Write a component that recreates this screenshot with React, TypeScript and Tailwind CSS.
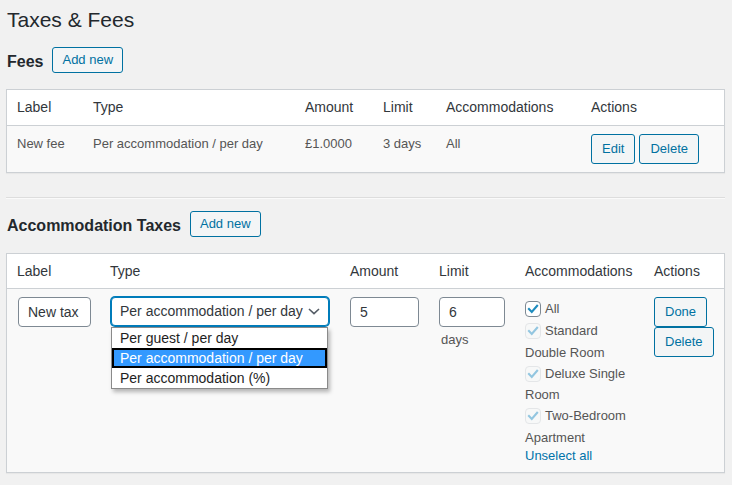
import React from "react";

function Btn({ children, className = "" }: { children: React.ReactNode; className?: string }) {
  return (
    <span
      className={
        "inline-flex shrink-0 items-center justify-center whitespace-nowrap rounded-[3px] border border-[#0071a1] bg-[#f3f5f6] text-[13px] text-[#0071a1] " +
        className
      }
    >
      {children}
    </span>
  );
}

function Check({ faint }: { faint?: boolean }) {
  return (
    <span
      className={
        faint
          ? "mr-[4px] inline-flex h-[16px] w-[16px] shrink-0 items-center justify-center rounded-[4px] border border-[#e4e6e8] bg-[#f7f8f8]"
          : "mr-[4px] inline-flex h-[16px] w-[16px] shrink-0 items-center justify-center rounded-[4px] border border-[#7e8993] bg-white"
      }
    >
      <svg viewBox="0 0 16 16" className="h-[16px] w-[16px]">
        <path
          d="M3.4 8.1 L6.6 11.4 L12.7 4.3"
          fill="none"
          stroke={faint ? "#93c6e0" : "#1e8cbe"}
          strokeWidth={2.4}
          strokeLinecap="square"
          strokeLinejoin="miter"
        />
      </svg>
    </span>
  );
}

export default function App() {
  return (
    <div className="min-h-[485px] bg-[#f1f1f1] pl-[6px] pr-[7px] pt-[5px] font-['Liberation_Sans',Arial,sans-serif] text-[13px] text-[#444]">
      <h1 className="pl-[1px] text-[21px] font-normal leading-[30px] text-[#23282d]">Taxes &amp; Fees</h1>

      <div className="mt-[12px] flex items-start gap-[9px] pl-[1px]">
        <h2 className="pt-[2px] text-[16px] font-bold leading-[26px] text-[#23282d]">Fees</h2>
        <Btn className="h-[26px] px-[9px]">Add new</Btn>
      </div>

      <div className="mt-[14px] border border-[#ccd0d4] bg-white shadow-[0_1px_1px_rgba(0,0,0,0.04)]">
        <div className="grid grid-cols-[76px_212px_78px_63px_145px_1fr] border-b border-[#ccd0d4] bg-white text-[14px] leading-[19px] text-[#32373c]">
          <div className="px-[10px] py-[8px]">Label</div>
          <div className="px-[10px] py-[8px]">Type</div>
          <div className="px-[10px] py-[8px]">Amount</div>
          <div className="px-[10px] py-[8px]">Limit</div>
          <div className="px-[10px] py-[8px]">Accommodations</div>
          <div className="px-[10px] py-[8px]">Actions</div>
        </div>
        <div className="grid grid-cols-[76px_212px_78px_63px_145px_1fr] bg-[#f9f9f9] leading-[19.5px] text-[#555]">
          <div className="px-[10px] py-[8px]">New fee</div>
          <div className="px-[10px] py-[8px]">Per accommodation / per day</div>
          <div className="px-[10px] py-[8px]">£1.0000</div>
          <div className="px-[10px] py-[8px]">3 days</div>
          <div className="px-[10px] py-[8px]">All</div>
          <div className="flex gap-[4px] px-[10px] py-[8px]">
            <Btn className="h-[30px] px-[10px]">Edit</Btn>
            <Btn className="h-[30px] px-[10px]">Delete</Btn>
          </div>
        </div>
      </div>

      <div className="mt-[24px] border-t border-b border-t-[#dddddd] border-b-[#fafafa]" />

      <div className="mt-[12px] flex items-start gap-[9px] pl-[1px]">
        <h2 className="pt-[2px] text-[16px] font-bold leading-[26px] text-[#23282d]">Accommodation Taxes</h2>
        <Btn className="h-[26px] px-[9px]">Add new</Btn>
      </div>

      <div className="mt-[14px] border border-[#ccd0d4] bg-white shadow-[0_1px_1px_rgba(0,0,0,0.04)]">
        <div className="grid grid-cols-[93px_240px_89px_86px_129px_1fr] border-b border-[#ccd0d4] bg-white text-[14px] leading-[18px] text-[#32373c]">
          <div className="px-[10px] py-[8px]">Label</div>
          <div className="px-[10px] py-[8px]">Type</div>
          <div className="px-[10px] py-[8px]">Amount</div>
          <div className="px-[10px] py-[8px]">Limit</div>
          <div className="px-[10px] py-[8px]">Accommodations</div>
          <div className="px-[10px] py-[8px]">Actions</div>
        </div>
        <div className="grid grid-cols-[93px_240px_89px_86px_129px_1fr] bg-[#f9f9f9] text-[#555]">
          <div className="py-[8px] pl-[11px] pr-[9px]">
            <div className="flex h-[30px] w-full items-center rounded-[4px] border border-[#7e8993] bg-white px-[9px] text-[14px] text-[#32373c]">
              New tax
            </div>
          </div>
          <div className="px-[10px] py-[8px]">
            <div className="relative ml-[1px] w-[218px]">
              <div className="flex h-[29px] items-center justify-between rounded-[4px] border border-[#007cba] bg-white pl-[8px] pr-[8px] text-[14px] text-[#32373c] shadow-[0_0_0_1px_#007cba]">
                <span className="whitespace-nowrap">Per accommodation / per day</span>
                <svg viewBox="0 0 12 7" className="h-[7px] w-[12px]">
                  <path d="M1 1 L6 5.6 L11 1" fill="none" stroke="#555d66" strokeWidth={1.6} />
                </svg>
              </div>
              <div className="absolute left-0 top-[30px] z-10 w-[217px] border border-[#8a8a8a] bg-white text-[14px] text-[#1e1e1e] shadow-[2px_3px_4px_rgba(0,0,0,0.28)]">
                <div className="h-[20px] whitespace-nowrap pl-[8px] leading-[20px]">Per guest / per day</div>
                <div className="h-[20px] whitespace-nowrap bg-[#3399ff] pl-[8px] leading-[20px] text-white shadow-[inset_0_0_0_2px_#000]">
                  Per accommodation / per day
                </div>
                <div className="h-[20px] whitespace-nowrap pl-[8px] leading-[20px]">Per accommodation (%)</div>
              </div>
            </div>
          </div>
          <div className="px-[10px] py-[8px]">
            <div className="flex h-[30px] w-full items-center rounded-[4px] border border-[#7e8993] bg-white px-[9px] text-[14px] text-[#32373c]">
              5
            </div>
          </div>
          <div className="px-[10px] py-[8px]">
            <div className="flex h-[30px] w-full items-center rounded-[4px] border border-[#7e8993] bg-white px-[9px] text-[14px] text-[#32373c]">
              6
            </div>
            <div className="mt-[3px] pl-[2px] leading-[20px]">days</div>
          </div>
          <div className="px-[10px] py-[8px]">
            <div className="flex h-[23px] items-center whitespace-nowrap">
              <Check />
              All
            </div>
            <div className="flex h-[22px] items-center whitespace-nowrap">
              <Check faint />
              Standard
            </div>
            <div className="flex h-[21px] items-center whitespace-nowrap">Double Room</div>
            <div className="flex h-[21px] items-center whitespace-nowrap">
              <Check faint />
              Deluxe Single
            </div>
            <div className="flex h-[21px] items-center whitespace-nowrap">Room</div>
            <div className="flex h-[22px] items-center whitespace-nowrap">
              <Check faint />
              Two-Bedroom
            </div>
            <div className="flex h-[21px] items-center whitespace-nowrap">Apartment</div>
            <div className="flex h-[16px] items-center whitespace-nowrap text-[#0073aa]">Unselect all</div>
          </div>
          <div className="flex flex-col items-start px-[10px] py-[8px]">
            <Btn className="h-[30px] px-[10px]">Done</Btn>
            <Btn className="h-[30px] px-[10px]">Delete</Btn>
          </div>
        </div>
      </div>
    </div>
  );
}
